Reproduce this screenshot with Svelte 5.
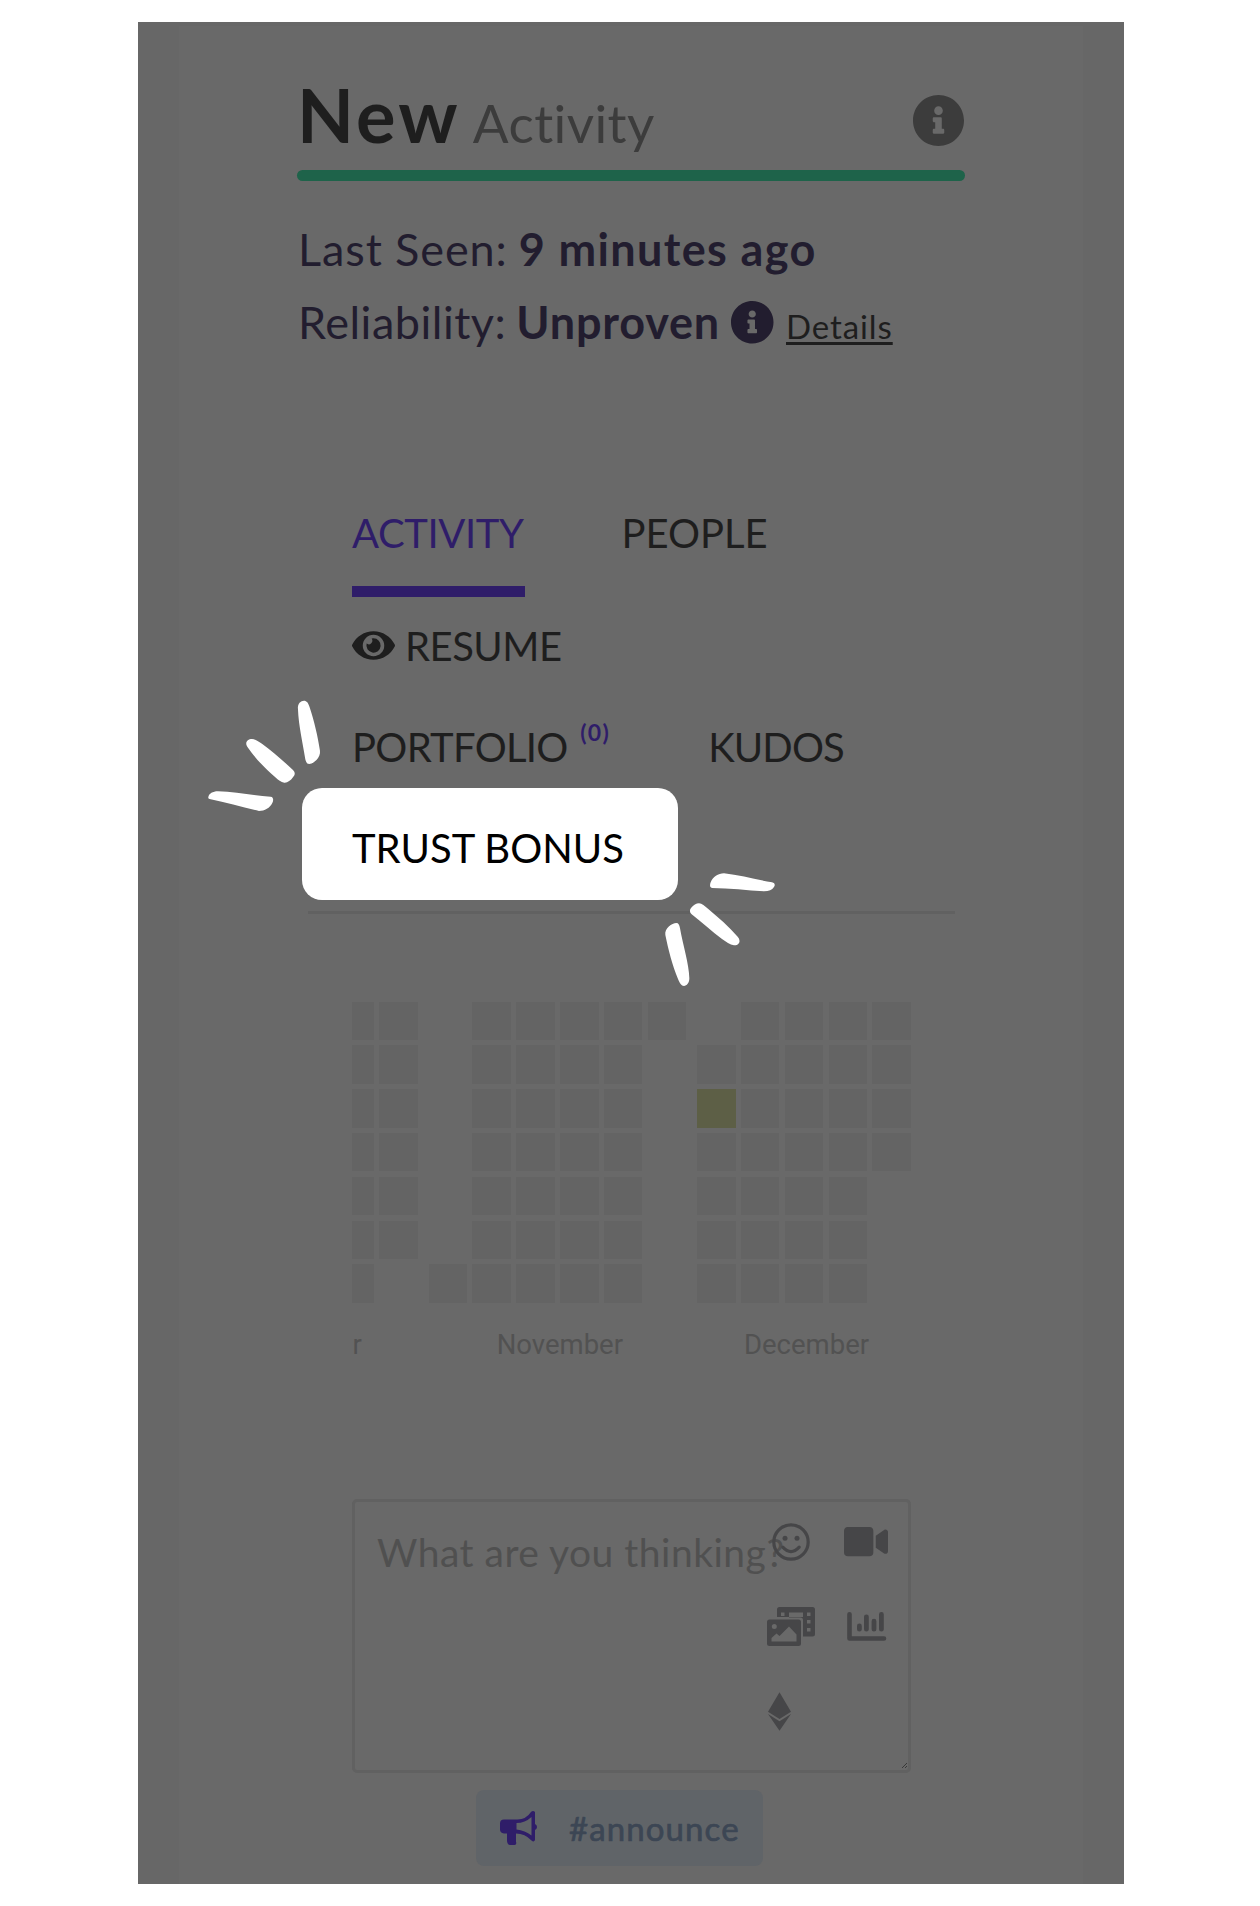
<script>
  // Each week column lists the first and last weekday row that holds a day.
  const months = [
    { name: 'r', cut: true, weeks: [[0, 6], [0, 5]] },
    { name: 'November', weeks: [[6, 6], [0, 6], [0, 6], [0, 6], [0, 6], [0, 0]] },
    { name: 'December', weeks: [[1, 6], [0, 6], [0, 6], [0, 6], [0, 3]], active: '0-2' }
  ];
  const days = [0, 1, 2, 3, 4, 5, 6];
</script>

{#snippet info()}
  <svg class="info" viewBox="8 8 496 496" fill="currentColor"><path d="M256 8C119.043 8 8 119.083 8 256c0 136.997 111.043 248 248 248s248-111.003 248-248C504 119.083 392.957 8 256 8zm0 110c23.196 0 42 18.804 42 42s-18.804 42-42 42-42-18.804-42-42 18.804-42 42-42zm56 254c0 6.627-5.373 12-12 12h-88c-6.627 0-12-5.373-12-12v-24c0-6.627 5.373-12 12-12h12v-64h-12c-6.627 0-12-5.373-12-12v-24c0-6.627 5.373-12 12-12h64c6.627 0 12 5.373 12 12v100h12c6.627 0 12 5.373 12 12v24z" /></svg>
{/snippet}

<main class="screen">
  <div class="sheet">
    <header class="head">
      <h1><span class="new">New</span><span class="act">Activity</span></h1>
      {@render info()}
    </header>
    <div class="bar"></div>

    <section class="facts">
      <p><span class="seen">Last Seen:</span><b class="ago">9 minutes ago</b></p>
      <p><span class="rel">Reliability:</span><b class="unp">Unproven</b>{@render info()}<a class="details" href="#details">Details</a></p>
    </section>

    <nav class="tabs">
      <div class="row first"><span class="tab on">ACTIVITY</span><span class="tab people">PEOPLE</span></div>
      <div class="row second">
        <svg class="eye" viewBox="0 64 576 384" fill="currentColor"><path d="M572.52 241.4C518.29 135.59 410.93 64 288 64S57.68 135.64 3.48 241.41a32.35 32.35 0 0 0 0 29.19C57.71 376.41 165.07 448 288 448s230.32-71.64 284.52-177.41a32.35 32.35 0 0 0 0-29.19zM288 400a144 144 0 1 1 144-144 143.93 143.93 0 0 1-144 144zm0-240a95.31 95.31 0 0 0-25.31 3.79 47.85 47.85 0 0 1-66.9 66.9A95.78 95.78 0 1 0 288 160z" /></svg>
        <span class="tab resume">RESUME</span>
      </div>
      <div class="row third"><span class="tab port">PORTFOLIO</span><sup>(0)</sup><span class="tab kudos">KUDOS</span></div>
      <div class="trust">
        <span class="tab">TRUST BONUS</span>
        <svg class="spark tl" viewBox="0 0 400 420" fill="#fff">
          <path d="M324 88C322 70 333 62 342 62C350 62 355 68 359 82C372 120 384 172 390 212C393 232 370 252 358 252C350 252 348 246 346 238C338 186 326 138 324 88Z" />
          <path d="M186 177C194 177 203 183 216 191C248 214 280 243 309 270C317 278 315 285 309 292C302 302 292 309 283 308C273 307 265 300 256 292C226 267 192 230 173 202C163 188 172 177 186 177Z" />
          <path d="M55 351C57 341 68 334 84 334C135 336 190 346 242 350C251 351 251 361 247 369C240 384 224 393 207 393C160 383 108 367 62 358C57 357 54 356 55 351Z" />
        </svg>
        <svg class="spark br" viewBox="180 80 360 370" fill="#fff">
          <path d="M372 99C420 104 470 118 516 126C525 128 526 134 522 140C516 149 507 153 492 153C442 150 388 143 336 143C329 142 329 134 332 126C339 110 354 99 372 99Z" />
          <path d="M297 189C306 189 314 197 324 205C355 231 388 260 413 289C424 302 418 315 402 315C390 314 378 304 366 296C335 273 304 245 275 222C269 217 268 209 273 203C280 194 289 189 297 189Z" />
          <path d="M229 248C236 248 238 254 240 264C249 316 267 370 268 414C268 428 260 437 252 437C244 437 239 428 234 416C217 376 205 328 196 284C193 263 216 249 229 248Z" />
        </svg>
      </div>
    </nav>
    <hr />

    <section class="calendar">
      {#each months as m}
        <div class="month" class:cut={m.cut}>
          <div class="weeks">
            {#each m.weeks as [from, to], w}
              <div class="week">
                {#each days as d}
                  <i class:day={d >= from && d <= to} class:active={m.active === `${w}-${d}`}></i>
                {/each}
              </div>
            {/each}
          </div>
          <span class="label">{m.name}</span>
        </div>
      {/each}
    </section>

    <section class="compose">
      <p>What are you thinking?</p>
      <div class="tools">
        <svg class="smile" viewBox="0 0 38 38" fill="none" stroke="currentColor"><circle cx="19" cy="19" r="17.2" stroke-width="3.2" /><path d="M10.8 24.2Q19 33 27.2 24.2" stroke-width="3.2" stroke-linecap="round" /><g fill="currentColor" stroke="none"><circle cx="13" cy="15.2" r="2.5" /><circle cx="25" cy="15.2" r="2.5" /></g></svg>
        <svg class="video" viewBox="0 64 576 384" fill="currentColor"><path d="M336.2 64H47.8C21.4 64 0 85.4 0 111.8v288.4C0 426.6 21.4 448 47.8 448h288.4c26.4 0 47.8-21.4 47.8-47.8V111.8c0-26.4-21.4-47.8-47.8-47.8zm189.4 37.7L416 177.3v157.4l109.6 75.5c21.2 14.6 50.4-.3 50.4-25.8V127.5c0-25.4-29.1-40.4-50.4-25.8z" /></svg>
        <svg class="photo" viewBox="0 0 48 39" fill="currentColor" fill-rule="evenodd">
          <path d="M12.5 0H45.5Q48 0 48 2.5V27Q48 29.5 45.5 29.5H36V13Q36 10.5 33.5 10.5H22V5.5H36V10H10V2.5Q10 0 12.5 0ZM14 5.5V9H17.5V5.5ZM40 5.5V9H43.5V5.5ZM40 13V16.5H43.5V13ZM40 21V24.5H43.5V21Z" />
          <path d="M2.5 12.5H31.5Q34 12.5 34 15V36.5Q34 39 31.5 39H2.5Q0 39 0 36.5V15Q0 12.5 2.5 12.5ZM7.3 17A2.5 2.5 0 1 0 7.3 22A2.5 2.5 0 1 0 7.3 17ZM4.5 34.5H29.5V27.5L22 19.5L12.5 29L9.5 26.5L4.5 31Z" />
        </svg>
        <svg class="chart" viewBox="0 0 39 29" fill="none" stroke="currentColor" stroke-linecap="round" stroke-linejoin="round"><path d="M2.5 2.3V26.5H37" stroke-width="4.6" /><path d="M12.4 14V17.2M19.4 4.8V17.2M27 9.2V17.2M34.4 2.5V17.2" stroke-width="4.8" /></svg>
        <svg class="eth" viewBox="8 0 304 512" fill="currentColor"><path d="M311.9 260.8L160 353.6 8 260.8 160 0l151.9 260.8zM160 383.4L8 290.6 160 512l152-221.4-152 92.8z" /></svg>
      </div>
      <svg class="grip" viewBox="0 0 5 5" stroke="#333" stroke-width=".9"><path d="M0 5L5 0M3 5L5 3" /></svg>
    </section>

    <button class="announce">
      <svg viewBox="0 0 37 34"><path fill="currentColor" d="M4 8.5H17.5Q26 8.500 31 1Q33 -1 35 1V13Q37 14 37 16T35 19V29Q34 31.500 31.500 29.500Q25 22.500 16 22.500V30.500Q17 34 14.500 34H10Q7.500 34 7 30V22.500H4Q0 22 0 18.500V12.500Q0 8.500 4 8.500Z" /><path fill="#606468" d="M16.5 12Q25 12 31.5 6V24.5Q25 19.3 16.5 18.5Z" /></svg>
      <span>#announce</span>
    </button>
  </div>
</main>

<style>
  :global(body) { background: #fff; }
  .screen { box-sizing: border-box; width: 986px; height: 1862px; margin: 22px 0 0 138px; padding: 4px 41px 0 41px; background: #676767; font-family: Lato, "Open Sans", sans-serif; font-variant-ligatures: none; }
  .sheet { box-sizing: border-box; height: 1858px; padding: 48px 118px 0 118px; background: #696969; }
  h1, p { margin: 0; font-weight: 400; }
  svg { display: block; flex: none; overflow: visible; }
  .head { display: flex; justify-content: space-between; height: 96px; }
  h1 { display: flex; align-items: baseline; gap: 12px; line-height: 82px; }
  .new { font-size: 74px; font-weight: 700; letter-spacing: 3.2px; color: #1e1e1e; }
  .act { font-size: 53px; letter-spacing: .4px; color: #3c3c3c; }
  .head .info { width: 51px; height: 51px; margin: 20.5px 1px 0 0; color: #3c3c3c; }
  .bar { height: 11px; border-radius: 6px; background: #1e634a; }
  .facts { padding-top: 32px; font-size: 45px; line-height: 72.5px; color: #221d2f; }
  .facts p { display: flex; align-items: baseline; height: 72.5px; }
  .seen { letter-spacing: .9px; margin: 0 11px 0 1px; }
  .ago { letter-spacing: 1.35px; }
  .rel { letter-spacing: .5px; margin: 0 10px 0 1px; }
  .unp { letter-spacing: .8px; }
  .facts .info { width: 42.5px; height: 42.5px; align-self: center; margin: 0 12.5px 0 11px; }
  .details { font-size: 33px; letter-spacing: .9px; color: #1e1e1e; text-decoration-thickness: 2.5px; text-underline-offset: 3px; }
  .tabs { margin-top: 155px; padding-left: 55px; font-size: 40px; line-height: 40px; color: #1e1e1e; }
  .row { display: flex; height: 40px; }
  .first { height: 83.5px; margin-bottom: 29px; }
  .second { align-items: center; margin-bottom: 61px; }
  .third { margin-bottom: 21px; }
  .on { box-sizing: border-box; width: 172.5px; margin-right: 97px; border-bottom: 11px solid #2f1d69; color: #2f1d69; letter-spacing: -.4px; }
  .eye { width: 43px; height: 29px; margin: 0 10px 0 0; }
  .resume { letter-spacing: -.5px; }
  .port { letter-spacing: -.7px; }
  sup { width: 31px; margin: -9px 97px 0 12.5px; font-size: 23px; line-height: 28px; font-weight: 700; letter-spacing: 1.3px; color: #2f1d69; }
  .kudos { letter-spacing: -.85px; }
  .trust { position: relative; box-sizing: border-box; width: 376px; height: 112px; margin-left: -50px; padding: 40px 0 0 50px; border-radius: 20px; background: #fff; color: #000; }
  .spark { position: absolute; }
  .tl { left: -112px; top: -108px; width: 133.3px; height: 140px; }
  .br { left: 358px; top: 79px; width: 120px; height: 123.3px; }
  hr { height: 3px; margin: 11px 10px 0 11px; border: 0; background: #616161; }
  .calendar { display: flex; gap: 11px; width: 560px; margin: 88px 0 0 54.5px; }
  .month { display: flex; flex-direction: column; align-items: center; gap: 26px; }
  .cut { align-items: flex-start; }
  .weeks, .week { display: flex; gap: 5.45px; }
  .week { flex-direction: column; }
  i { width: 38.4px; height: 38.4px; }
  .cut .week:first-child i { width: 22.3px; }
  .day { background: #646464; }
  .active { background: #5d5f46; }
  .label { font: 27.5px/32px Roboto, sans-serif; color: #525252; padding-left: 5px; }
  .cut .label { padding-left: 1px; }
  .compose { position: relative; box-sizing: border-box; width: 559px; height: 274px; margin: 138.5px 0 0 55px; padding: 30px 22px; border: 3px solid #616161; border-radius: 5px; color: #505050; font-size: 39px; line-height: 40px; }
  .compose p { letter-spacing: .5px; white-space: nowrap; }
  .tools { position: absolute; left: 412px; top: 19.5px; display: grid; grid-template: repeat(3, 40px) / 48px 44px; gap: 45px 29px; align-items: center; justify-items: center; color: #464648; }
  .smile { width: 38px; height: 38px; }
  .video { width: 44px; height: 29.3px; }
  .photo { width: 48px; height: 39px; }
  .chart { width: 39px; height: 29px; }
  .eth { width: 23px; height: 39px; justify-self: start; margin-left: 1px; }
  .grip { position: absolute; right: 1px; bottom: 2px; width: 5px; height: 5px; }
  .announce { display: flex; align-items: center; width: 287px; height: 76px; margin: 17px 0 0 179px; padding: 0 0 0 24px; border: 0; border-radius: 8px; background: #606468; color: #3c4654; font: 400 33px/40px Lato, sans-serif; letter-spacing: 1.1px; -webkit-text-stroke: .7px #3c4654; }
  .announce svg { width: 37px; height: 34px; margin-right: 32px; color: #2f1d69; }
</style>
